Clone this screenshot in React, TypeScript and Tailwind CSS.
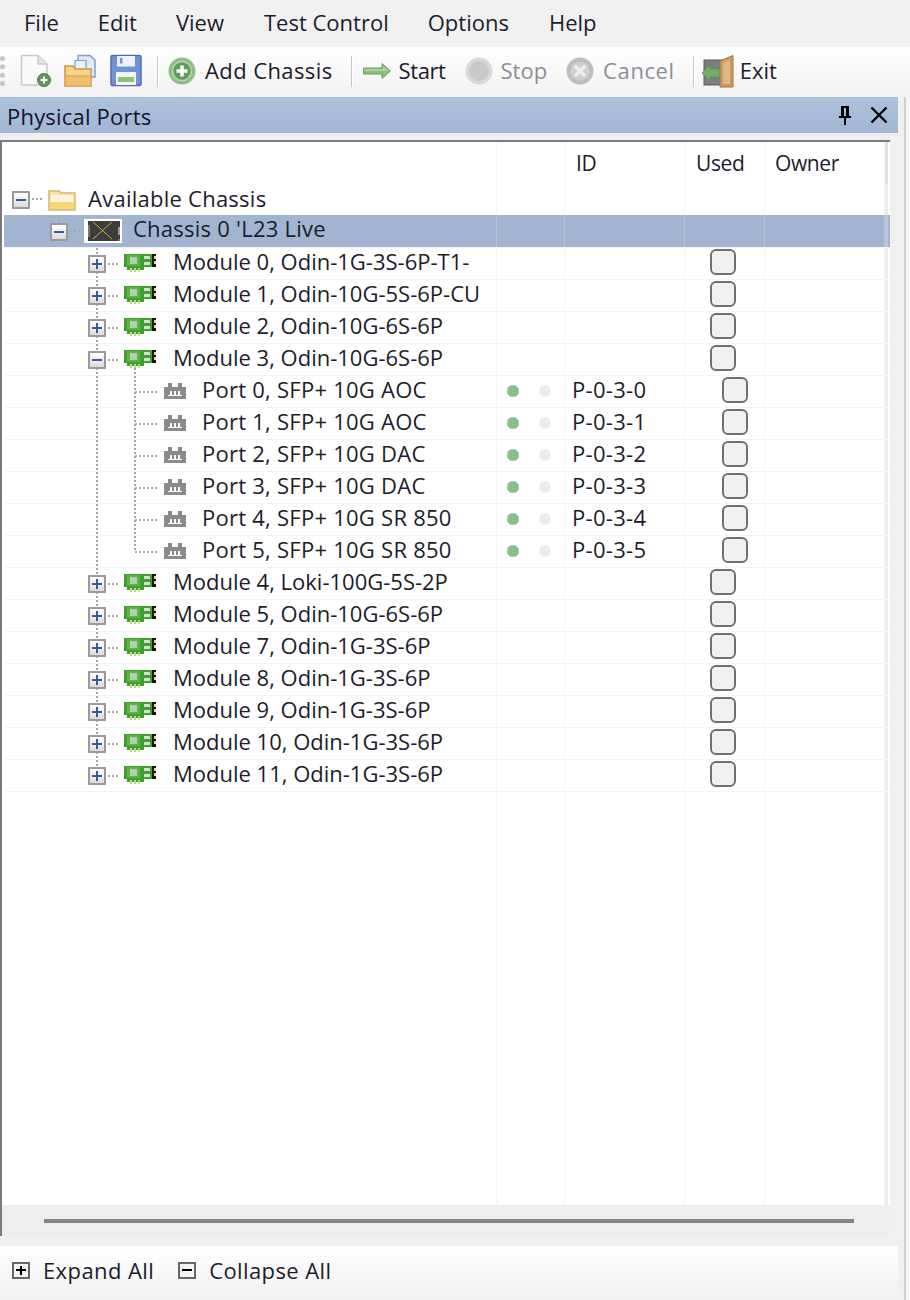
import React from 'react';

const font = "font-['Open_Sans','Noto_Sans',sans-serif]";
const cols = 'grid grid-cols-[493px_68px_120px_80px_120px_3px]';
const vDots = 'bg-[repeating-linear-gradient(to_bottom,#a6a6a6_0,#a6a6a6_2px,transparent_2px,transparent_4px)]';

const menus = [
  { label: 'File', cls: 'ml-[24px]' },
  { label: 'Edit', cls: 'ml-[39px]' },
  { label: 'View', cls: 'ml-[39px]' },
  { label: 'Test Control', cls: 'ml-[40px]' },
  { label: 'Options', cls: 'ml-[39px]' },
  { label: 'Help', cls: 'ml-[40px]' },
];

const NewIcon = () => (
  <svg width="32" height="34" viewBox="0 0 32 34">
    <path d="M1.5 1.5H18L27 10V31H1.5Z" fill="#fafafa" stroke="#c9c9c9" strokeWidth="1.5" />
    <path d="M18 1.5V10H27" fill="#e4e4e4" stroke="#c9c9c9" strokeWidth="1.5" />
    <circle cx="24" cy="26" r="6.5" fill="#5d9c55" stroke="#3f7a3c" />
    <path d="M20.5 26h7M24 22.5v7" stroke="#fff" strokeWidth="2" />
  </svg>
);

const OpenIcon = () => (
  <svg width="32" height="34" viewBox="0 0 32 34">
    <path d="M14 1.5H26L31 6V23H14Z" fill="#dfe9f8" stroke="#7f9fd0" strokeWidth="1.5" />
    <path d="M11 6.5H22V23H11Z" fill="#eef3fb" stroke="#7f9fd0" strokeWidth="1.2" />
    <path d="M1 12H9L11 15H27V32H1Z" fill="#f6d58f" stroke="#cf9440" strokeWidth="1.5" />
    <path d="M1.5 22H27" stroke="#d9a550" strokeWidth="1.5" />
    <path d="M2 23H26.5V31.5H2Z" fill="#efc069" />
  </svg>
);

const SaveIcon = () => (
  <svg width="32" height="34" viewBox="0 0 32 34">
    <rect x="1" y="1.5" width="30" height="30" rx="1.5" fill="#6f93d6" stroke="#4d6fb3" strokeWidth="1.5" />
    <path d="M7 2H25V12.5H7Z" fill="#eef2fa" />
    <rect x="10" y="4" width="2.5" height="5.5" fill="#6f93d6" />
    <rect x="6" y="18" width="20" height="13" fill="#f0f4fb" />
    <rect x="8" y="23" width="16" height="5" fill="#8dc06f" />
  </svg>
);

const AddIcon = () => (
  <svg width="28" height="28" viewBox="0 0 28 28">
    <circle cx="14" cy="14" r="13.5" fill="#8fbe87" />
    <circle cx="14" cy="14" r="9.5" fill="#5f9d58" stroke="#b7d7b1" strokeWidth="1.5" />
    <path d="M14 8.5v11M8.5 14h11" stroke="#fff" strokeWidth="3.5" />
  </svg>
);

const ArrowIcon = () => (
  <svg width="28" height="16" viewBox="0 0 28 16">
    <path d="M0.5 5H19V0.5L27.5 8L19 15.5V11H0.5Z" fill="#8fbe78" stroke="#6f9f68" />
    <path d="M1.5 6H20V3L25.5 8H1.5Z" fill="#add49a" />
  </svg>
);

const StopIcon = () => (
  <svg width="28" height="28" viewBox="0 0 28 28">
    <circle cx="14" cy="14" r="13.5" fill="#d9d9d9" />
    <circle cx="14" cy="14" r="10" fill="#c9c9c9" />
  </svg>
);

const CancelIcon = () => (
  <svg width="28" height="28" viewBox="0 0 28 28">
    <circle cx="14" cy="14" r="13.5" fill="#bdbdbd" />
    <circle cx="14" cy="14" r="9.5" fill="#cfcfcf" />
    <path d="M9 9l10 10M19 9L9 19" stroke="#ededed" strokeWidth="3.5" />
  </svg>
);

const ExitIcon = () => (
  <svg width="32" height="33" viewBox="0 0 32 33">
    <rect x="2" y="5" width="19" height="25" fill="#7d7d7d" stroke="#5c5c5c" />
    <path d="M0 18L8 10V14H18V22H8V26Z" fill="#74ad68" stroke="#5d9556" strokeWidth="0.8" />
    <path d="M18 6L31 0.5V32H18Z" fill="#c99a63" stroke="#a87539" />
    <path d="M21 8L28 5V29H21Z" fill="#dcb88a" />
    <rect x="24" y="16" width="2" height="3" fill="#e8c040" />
  </svg>
);

const Sep = ({ cls }: { cls: string }) => <div className={`h-[31px] w-[2px] bg-[#c8c8c8] border-r border-white ${cls}`} />;

const Expander = ({ open, cls = '' }: { open: boolean; cls?: string }) => (
  <div className={`relative w-[18px] h-[18px] shrink-0 border-[2px] border-[#999999] rounded-[1px] bg-gradient-to-b from-white to-[#dcdcdc] z-10 ${cls}`}>
    <div className="absolute left-[2px] right-[2px] top-[6px] h-[2px] bg-[#3d5a93]" />
    {!open && <div className="absolute top-[2px] bottom-[2px] left-[6px] w-[2px] bg-[#3d5a93]" />}
  </div>
);

const ModuleIcon = () => (
  <svg width="32" height="18" viewBox="0 0 32 18" className="shrink-0 -translate-y-[1px]">
    <path d="M0 0H28V13H20V16H3V13H0Z" fill="#3f9e2c" />
    <rect x="3" y="1" width="13" height="11" fill="#59b544" />
    <rect x="6" y="3" width="7" height="7" fill="#b9cfb3" />
    <rect x="20" y="2" width="6" height="3" fill="#d5dcd0" />
    <rect x="20" y="8" width="6" height="3" fill="#d5dcd0" />
    <rect x="28" y="0" width="4" height="13" fill="#151515" />
    <rect x="30" y="2" width="2" height="3" fill="#e5dc9a" />
    <rect x="30" y="7" width="2" height="3" fill="#e5dc9a" />
    <path d="M6 14h2v4H6zM10 14h2v4h-2zM14 14h2v4h-2z" fill="#c3d58c" />
  </svg>
);

const PortIcon = () => (
  <svg width="22" height="16" viewBox="0 0 22 16" className="shrink-0 -translate-y-[1px]">
    <path d="M0 4H4V0H8V4H14V0H18V4H22V16H0Z" fill="#8a8a8a" />
    <path d="M6 8h2v4H6zM10 8h2v4h-2zM14 8h2v4h-2z" fill="#fff" />
    <path d="M4 12h14v1H4z" fill="#fff" />
  </svg>
);

const ChassisIcon = () => (
  <div className="w-[38px] h-[24px] shrink-0 bg-white pl-[4px] pr-[2px] pt-[2px]">
    <svg width="32" height="20" viewBox="0 0 32 20" className="block">
      <rect width="32" height="20" fill="#3c3c3c" />
      <path d="M5 1L24 18M24 1L5 18" stroke="#cfae3c" strokeWidth="1" />
      <rect x="0" y="4" width="2" height="12" fill="#777" />
      <rect x="30" y="6" width="2" height="8" fill="#999" />
      <rect x="30" y="18" width="2" height="2" fill="#3f9e2c" />
    </svg>
  </div>
);

const Dots = ({ w }: { w: string }) => (
  <div className={`h-[2px] bg-[repeating-linear-gradient(to_right,#a6a6a6_0,#a6a6a6_2px,transparent_2px,transparent_4px)] ${w}`} />
);

const Check = ({ cls }: { cls: string }) => (
  <div className={`w-[26px] h-[26px] -translate-y-[2px] rounded-[6px] border-2 border-[#707070] bg-[#f1f1f1] ${cls}`} />
);

const Cells = ({ sel, id, status, check }: { sel?: boolean; id?: string; status?: boolean; check?: string }) => {
  const line = sel ? 'border-r border-[#b5c5dc]' : 'border-r border-[#f3f3f9]';
  return (
    <>
      <div className={`${line} flex items-center`}>
        {status && (
          <>
            <div className="ml-[10px] -translate-y-[1px] w-[12px] h-[12px] rounded-[5px] bg-[#86c086] border border-[#a3d0a3]" />
            <div className="ml-[20px] -translate-y-[1px] w-[12px] h-[12px] rounded-[5px] bg-[#ebebeb] border border-[#f4f4f4]" />
          </>
        )}
      </div>
      <div className={`${line} pl-[7px] flex items-center text-[22px] leading-[24px] tracking-[0.3px] text-[#1c1c2c]`}>
        <span className="-translate-y-[3px]">{id}</span>
      </div>
      <div className={`${line} flex items-center`}>{check && <Check cls={check} />}</div>
      <div className={line} />
      <div className={sel ? 'bg-[#b5c5dc]' : 'bg-[#ececec]'} />
    </>
  );
};

const modulesA = ['Module 0, Odin-1G-3S-6P-T1-', 'Module 1, Odin-10G-5S-6P-CU', 'Module 2, Odin-10G-6S-6P'];
const ports = ['Port 0, SFP+ 10G AOC', 'Port 1, SFP+ 10G AOC', 'Port 2, SFP+ 10G DAC', 'Port 3, SFP+ 10G DAC', 'Port 4, SFP+ 10G SR 850', 'Port 5, SFP+ 10G SR 850'];
const modulesB = ['Module 4, Loki-100G-5S-2P', 'Module 5, Odin-10G-6S-6P', 'Module 7, Odin-1G-3S-6P', 'Module 8, Odin-1G-3S-6P', 'Module 9, Odin-1G-3S-6P', 'Module 10, Odin-1G-3S-6P', 'Module 11, Odin-1G-3S-6P'];

const rowText = 'text-[22px] leading-[24px] text-[#1c1c2c] whitespace-nowrap';

const ModuleRow = ({ label, open, last }: { label: string; open?: boolean; last?: boolean }) => (
  <div className={`${cols} border-t border-[#f3f3f9] ${last ? 'h-[33px] border-b' : 'h-[32px]'}`}>
    <div className="relative flex items-center pl-[84px] border-r border-[#f3f3f9]">
      <div className={`absolute left-[92px] top-0 w-[2px] ${vDots} ${last ? 'h-[16px]' : 'h-[32px]'}`} />
      {open && <div className={`absolute left-[130px] top-[24px] h-[8px] w-[2px] ${vDots}`} />}
      <Expander open={!!open} />
      <Dots w="w-[12px] ml-[2px] mr-[4px]" />
      <ModuleIcon />
      <span className={`ml-[17px] -translate-y-[3px] ${rowText}`}>{label}</span>
    </div>
    <Cells check="ml-[25px]" />
  </div>
);

const PortRow = ({ label, index }: { label: string; index: number }) => (
  <div className={`${cols} h-[32px] border-t border-[#f3f3f9]`}>
    <div className="relative flex items-center pl-[131px] border-r border-[#f3f3f9]">
      <div className={`absolute left-[92px] top-0 h-[32px] w-[2px] ${vDots}`} />
      <div className={`absolute left-[130px] top-0 w-[2px] ${vDots} ${index === 5 ? 'h-[16px]' : 'h-[32px]'}`} />
      <Dots w="w-[23px] mr-[6px]" />
      <PortIcon />
      <span className={`ml-[16px] -translate-y-[3px] tracking-[0.25px] ${rowText}`}>{label}</span>
    </div>
    <Cells status id={`P-0-3-${index}`} check="ml-[37px]" />
  </div>
);

export default function App() {
  return (
    <div className={`h-[1300px] w-[910px] overflow-hidden flex flex-col bg-[#f0f0f0] ${font}`}>
      {/* menu bar */}
      <div className="h-[47px] shrink-0 flex items-center pb-[2px] bg-[#f1f1f1] text-[22px] text-[#1c1c2c]">
        {menus.map((m) => (
          <span key={m.label} className={m.cls}>{m.label}</span>
        ))}
      </div>

      {/* toolbar */}
      <div className="h-[50px] shrink-0 flex items-center pb-[2px] bg-gradient-to-b from-white to-[#f1f1f1] text-[22px] text-[#1c1c2c]">
        <div className="w-[5px] h-[30px] ml-0 border-l-[5px] border-dotted border-[#c4c4c4]" />
        <div className="ml-[15px]"><NewIcon /></div>
        <div className="ml-[12px]"><OpenIcon /></div>
        <div className="ml-[14px]"><SaveIcon /></div>
        <Sep cls="ml-[15px]" />
        <div className="ml-[9px]"><AddIcon /></div>
        <span className="ml-[9px] pb-[2px] tracking-[0.4px]">Add Chassis</span>
        <Sep cls="ml-[18px]" />
        <div className="ml-[10px]"><ArrowIcon /></div>
        <span className="ml-[8px] pb-[2px] tracking-[-0.4px]">Start</span>
        <div className="ml-[19px]"><StopIcon /></div>
        <span className="ml-[8px] pb-[2px] text-[#8e8e98]">Stop</span>
        <div className="ml-[19px]"><CancelIcon /></div>
        <span className="ml-[9px] pb-[2px] tracking-[0.6px] text-[#8e8e98]">Cancel</span>
        <Sep cls="ml-[18px]" />
        <div className="ml-[7px]"><ExitIcon /></div>
        <span className="ml-[6px] pb-[2px]">Exit</span>
      </div>

      <div className="flex-1 flex min-h-0">
        <div className="w-[898px] shrink-0 flex flex-col">
          {/* panel title */}
          <div className="h-[36px] shrink-0 flex items-center justify-between pl-[7px] pr-[10px] bg-gradient-to-b from-[#adc0dc] to-[#a3b6d3] text-[22px] tracking-[0.2px] text-[#14142a]">
            <span className="pt-[3px]">Physical Ports</span>
            <div className="flex items-center gap-[18px]">
              <svg width="14" height="20" viewBox="0 0 14 20">
                <path d="M3 1h8v10h2v2H1v-2h2zM6 3v8h2V3zM6 13h2v7H6z" fill="#000" fillRule="evenodd" />
              </svg>
              <svg width="18" height="18" viewBox="0 0 18 18">
                <path d="M1.5 1.5L16.5 16.5M16.5 1.5L1.5 16.5" stroke="#000" strokeWidth="2.4" />
              </svg>
            </div>
          </div>

          <div className="h-[7px] shrink-0" />

          {/* tree list */}
          <div className="w-[890px] h-[1096px] shrink-0 flex flex-col border-t-2 border-l-2 border-[#7a7a7a] bg-white pl-[2px]">
            <div className={`${cols} h-[41px] shrink-0 text-[21px] tracking-[-0.4px] text-[#1c1c2c]`}>
              <div className="border-r border-[#f3f3f9]" />
              <div className="border-r border-[#f3f3f9]" />
              <div className="border-r border-[#f3f3f9] pl-[11px] pt-[6px]">ID</div>
              <div className="border-r border-[#f3f3f9] pl-[11px] pt-[6px]">Used</div>
              <div className="border-r border-[#f3f3f9] pl-[10px] pt-[6px]">Owner</div>
              <div className="bg-[#e2e2e2]" />
            </div>

            <div className={`${cols} h-[32px] shrink-0`}>
              <div className="flex items-center pl-[8px] border-r border-[#f3f3f9]">
                <Expander open cls="mt-[2px]" />
                <Dots w="w-[12px] ml-[2px] mr-[4px]" />
                <svg width="28" height="23" viewBox="0 0 28 23" className="shrink-0">
                  <path d="M1 3H11L13 5H27V22H1Z" fill="#f8e5a8" stroke="#dcb56c" strokeWidth="1.5" />
                  <path d="M3 7H25V14H3Z" fill="#fdf5d9" />
                  <path d="M2 14H26V21H2Z" fill="#f5d777" />
                </svg>
                <span className={`ml-[12px] -translate-y-[1px] tracking-[0.25px] ${rowText}`}>Available Chassis</span>
              </div>
              <Cells />
            </div>

            <div className={`${cols} h-[32px] shrink-0 bg-[#a1b4d0]`}>
              <div className="relative flex items-center pl-[46px] border-r border-[#b5c5dc]">
                <div className={`absolute left-[54px] top-0 h-[8px] w-[2px] ${vDots}`} />
                <Expander open cls="mt-[2px]" />
                <Dots w="w-[12px] ml-[2px] mr-[2px]" />
                <ChassisIcon />
                <span className={`ml-[11px] -translate-y-[3px] tracking-[0.25px] ${rowText}`}>Chassis 0 'L23 Live</span>
              </div>
              <Cells sel />
            </div>

            {modulesA.map((m) => <ModuleRow key={m} label={m} />)}
            <ModuleRow label="Module 3, Odin-10G-6S-6P" open />
            {ports.map((p, i) => <PortRow key={p} label={p} index={i} />)}
            {modulesB.map((m, i) => <ModuleRow key={m} label={m} last={i === modulesB.length - 1} />)}

            {/* empty part of the columns */}
            <div className={`${cols} flex-1 min-h-0`}>
              <div className="border-r border-[#f3f3f9]" />
              <div className="border-r border-[#f3f3f9]" />
              <div className="border-r border-[#f3f3f9]" />
              <div className="border-r border-[#f3f3f9]" />
              <div className="border-r border-[#f3f3f9]" />
              <div className="bg-[#ececec]" />
            </div>

            {/* horizontal scrollbar */}
            <div className="h-[31px] shrink-0 flex items-center bg-[#eeeeee] pl-[42px] -ml-[2px]">
              <div className="w-[810px] h-[4px] bg-[#858585]" />
            </div>
          </div>

          <div className="h-[10px] shrink-0" />

          {/* bottom bar */}
          <div className="flex-1 flex items-center pb-[6px] bg-gradient-to-b from-white to-[#f0f0f0] text-[22px] tracking-[0.4px] text-[#1c1c2c]">
            <div className="relative ml-[12px] w-[18px] h-[17px] border-2 border-[#666666] bg-[#f4f4f4]">
              <div className="absolute left-[2px] right-[2px] top-[5.5px] h-[2px] bg-black" />
              <div className="absolute top-[2px] bottom-[2px] left-[6px] w-[2px] bg-black" />
            </div>
            <span className="ml-[13px]">Expand All</span>
            <div className="relative ml-[24px] w-[18px] h-[17px] border-2 border-[#666666] bg-[#f4f4f4]">
              <div className="absolute left-[2px] right-[2px] top-[5.5px] h-[2px] bg-black" />
            </div>
            <span className="ml-[13px]">Collapse All</span>
          </div>
        </div>

        {/* edge of the neighbouring panel */}
        <div className="ml-[6px] w-[6px] border-l-2 border-[#d0d0d0] bg-[#f5f5f5]" />
      </div>
    </div>
  );
}
